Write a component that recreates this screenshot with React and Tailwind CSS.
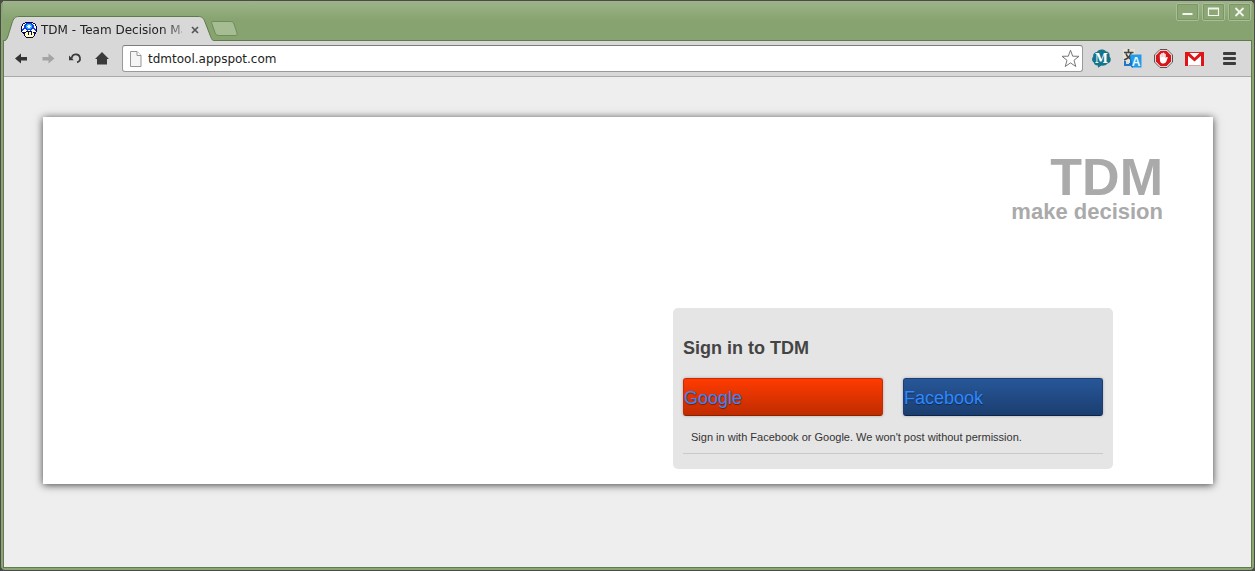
import React from "react";

const MUSHROOM = [
  "....kkkkkkkk....",
  "..kkwbbbbbbwkk..",
  ".kwwbbccccbbwwk.",
  ".kwbbccwwccbbwk.",
  "kwwbbcwwwwcbbwwk",
  "kwwbbccwwccbbwwk",
  "kwbbbbccccbbbbwk",
  "kbbwwbbbbbbwwbbk",
  "kbwwwwbwwbwwwwbk",
  "kwwwwkkkkkkwwwwk",
  ".kkkkyykyykykkk.",
  "..kkyyykyykyykk.",
  "...kyyykyykyyk..",
  "...kyyyyyyyyyk..",
  "....kyyyyyyyk...",
  ".....kkkkkkk....",
];
const INK = { k: "#080840", w: "#ffffff", b: "#1040e8", c: "#28b8ff", y: "#ffffb8" };

function Mushroom() {
  return (
    <svg width="16" height="16" viewBox="0 0 16 16" shapeRendering="crispEdges" className="shrink-0" aria-hidden="true">
      {MUSHROOM.flatMap((row, y) =>
        [...row].map((c, x) => (c === "." ? null : <rect key={`${x}-${y}`} x={x} y={y} width="1" height="1" fill={INK[c]} />))
      )}
    </svg>
  );
}

function WindowButton({ label, children }) {
  return (
    <button aria-label={label} className="flex h-[18px] w-[23px] items-center justify-center rounded-[2px] border border-[#a9bf98] bg-[#8ca675] outline outline-1 -outline-offset-2 outline-[#7c9766]">
      <svg width="13" height="12" viewBox="0 0 13 12" fill="none" stroke="#f1f5ec" strokeWidth="2">{children}</svg>
    </button>
  );
}

function TitleBar() {
  return (
    <header className="relative flex h-10 items-end justify-between border-b border-[#5f7a4b] bg-linear-to-b from-[#9db48a] to-[#87a36f] to-50%">
      <div className="flex h-6 items-start">
        <div className="relative flex h-[25px] w-[211px] items-center pl-[18px]">
          <svg className="absolute left-0 top-0" width="211" height="25" viewBox="0 0 211 25" aria-hidden="true">
            <path d="M0 25 C3 25 4 23 5 20 L9 7 C10.500 2.500 12 .5 16 .5 H195 C199 .5 200.500 2 202 6 L207 19 C208.500 23 209 24.500 211 24.500 V25 Z" fill="#d8d8d8" />
            <path d="M0 25 C3 25 4 23 5 20 L9 7 C10.500 2.500 12 .5 16 .5 H195 C199 .5 200.500 2 202 6 L207 19 C208.500 23 209 24.500 211 24.500" fill="none" stroke="#5f7a4b" />
          </svg>
          <div className="relative flex items-center pt-0.5">
            <Mushroom />
            <span className="ml-1 w-[141px] overflow-hidden whitespace-nowrap text-xs text-[#222] [mask-image:linear-gradient(to_right,black_86%,#0006)]">
              TDM - Team Decision Making
            </span>
            <button aria-label="Close tab" className="ml-[7px] flex size-3 items-center justify-center">
              <svg width="8" height="8" viewBox="0 0 8 8" stroke="#555" strokeWidth="1.700"><path d="M1 1 7 7M7 1 1 7" /></svg>
            </button>
          </div>
        </div>
        <button aria-label="New tab" className="-ml-1 mt-1">
          <svg width="29" height="18" viewBox="0 0 29 18">
            <path d="M3 1.500 H20 C22 1.500 23 2 24 4 L27 13 C27.500 15 27 15.500 25 15.500 H10 C7 15.500 6 15 5 12.500 L2 4 C1.300 2.200 1.500 1.500 3 1.500Z" fill="#a6bc93" stroke="#718c5b" />
          </svg>
        </button>
      </div>
      <div className="mt-0.5 flex gap-[3px] self-start pr-px">
        <WindowButton label="Minimise"><path d="M1.500 8h10" /></WindowButton>
        <WindowButton label="Maximise"><path d="M1 2.500h11" /><path d="M1.500 2v7.500h10V2" strokeWidth="1.200" /></WindowButton>
        <WindowButton label="Close"><path d="M2.500 2 10.500 10M10.500 2 2.500 10" strokeWidth="1.800" /></WindowButton>
      </div>
    </header>
  );
}

function Icon({ label, children }) {
  return (
    <button aria-label={label} className="flex size-5 shrink-0 items-center justify-center">
      {children}
    </button>
  );
}

function Toolbar() {
  return (
    <nav className="flex h-9 items-center border-b border-[#a9a9a9] bg-[#d8d8d8] pl-[7px] pr-3" aria-label="Browser">
      <div className="flex items-center gap-[7px]">
        <Icon label="Back">
          <svg width="13" height="11" viewBox="0 0 13 11"><path d="M0 5.500 6 .5V4H12V7.500H6V10.500Z" fill="#333" /></svg>
        </Icon>
        <Icon label="Forward">
          <svg width="13" height="11" viewBox="0 0 13 11"><path d="M12.500 5.500 6.500 .5V4H.5V7.500H6.500V10.500Z" fill="#a4a4a4" /></svg>
        </Icon>
        <Icon label="Reload">
          <svg width="14" height="13" viewBox="0 0 14 13"><path d="M3.800 6.500A4.100 4.100 0 1 1 9 10.400" fill="none" stroke="#3a3a3a" strokeWidth="1.700" /><path d="M1 3.500V8.200H5.800Z" fill="#3a3a3a" /></svg>
        </Icon>
        <Icon label="Home">
          <svg width="14" height="13" viewBox="0 0 14 13"><path d="M7 0 14 7H12V12.500H2V7H0Z" fill="#3a3a3a" /></svg>
        </Icon>
      </div>
      <div className="ml-2.5 flex h-[27px] min-w-0 flex-1 items-center rounded-[3px] border border-[#9a9a9a] border-t-[#7d7d7d] bg-white pl-1.5 pr-0.5">
        <svg width="13" height="16" viewBox="0 0 13 16" className="shrink-0" aria-hidden="true">
          <path d="M1.500 .5H8L12 4.500V15.500H1.500Z" fill="#f5f5f5" stroke="#959595" /><path d="M8 .5V4.500H12" fill="#fff" stroke="#959595" />
        </svg>
        <input aria-label="Address" type="text" defaultValue="tdmtool.appspot.com" className="ml-1.5 h-5 min-w-0 flex-1 bg-transparent text-xs text-[#222] outline-none" />
        <Icon label="Bookmark">
          <svg width="19" height="19" viewBox="0 0 19 19"><path d="M9.500 1.200 11.700 7.200 18 7.300 13 11.300 14.800 17.500 9.500 13.900 4.200 17.500 6 11.300 1 7.300 7.300 7.200Z" fill="#fff" stroke="#777" strokeLinejoin="round" /></svg>
        </Icon>
      </div>
      <div className="ml-2 flex items-center gap-[11px]">
        <Icon label="Mendeley">
          <svg width="19" height="19" viewBox="0 0 19 19"><path d="M5 3C6 0 12-.5 14 2.500C17 2.500 18 5 17.500 7.500C20 10 18.500 14.500 15.500 14.500C14 16.500 11 17 9.500 16.500L6 18.800 5.800 16.500C3 16.500 2 15 1.800 13.500C-.5 12-.3 9 1.200 7.500C.8 5 2.500 3.200 5 3Z" fill="#13748a" /><text x="9.500" y="13.500" textAnchor="middle" fontFamily="DejaVu Serif, serif" fontWeight="bold" fontSize="12" fill="#fff">M</text></svg>
        </Icon>
        <Icon label="Translate">
          <svg width="19" height="19" viewBox="0 0 19 19"><path d="M0 0H12V13H0Z" fill="#e6e2d4" /><path d="M5.500 0V3M1 3.500H10.500M8 4C7 8 4 10 1 11M3 4.500C4 8 6 9.500 9 10.500" fill="none" stroke="#444" strokeWidth="1.600" /><path d="M2 12V16H7V14" fill="none" stroke="#2375c9" strokeWidth="2" /><path d="M7 5.500H18.500V18.500H9L7 16Z" fill="#239be9" /><path d="M7 5.500 10 18.500H9L7 16Z" fill="#1477c5" /><text x="13.200" y="16.500" textAnchor="middle" fontFamily="Liberation Sans, sans-serif" fontWeight="bold" fontSize="12" fill="#e8f6ff">A</text></svg>
        </Icon>
        <Icon label="Ad blocker">
          <svg width="19" height="19" viewBox="0 0 19 19"><path d="M6 .5H13L18.500 6V13L13 18.500H6L.5 13V6Z" fill="#fff" stroke="#555" /><path d="M6.500 1.800H12.500L17.200 6.500V12.500L12.500 17.200H6.500L1.800 12.500V6.500Z" fill="#d6161c" /><path d="M5.800 8.500V5.600Q6.500 4.800 7.100 5.600V4.500Q7.900 3.700 8.600 4.500V3.900Q9.400 3.100 10.200 3.900V4.700Q11 4 11.700 4.900V9L12.600 8Q13.700 7.600 13.800 8.500L12.300 12.500Q11.500 14.500 9.500 14.500H8.300Q6.600 14.300 6.100 12.200Z" fill="#fff" /><path d="M7.200 5V8.300M8.700 4.300V8.300M10.200 4.300V8.300" stroke="#e88" strokeWidth=".5" /></svg>
        </Icon>
        <Icon label="Gmail">
          <svg width="19" height="14" viewBox="0 0 19 14"><path d="M0 0H19V14H0Z" fill="#fff" /><path d="M3 .5H16" stroke="#d22" /><path d="M3.500 13.500H15.500" stroke="#dba5a2" /><path d="M0 0H3.500L9.500 5.800 15.500 0H19V14H16V3.800L9.500 9.500 3 3.800V14H0Z" fill="#de1418" /></svg>
        </Icon>
      </div>
      <div className="ml-[15px]">
        <Icon label="Menu">
          <svg width="13" height="13" viewBox="0 0 13 13" fill="#3c3c3c"><rect width="13" height="3" rx="1" /><rect y="5" width="13" height="3" rx="1" /><rect y="10" width="13" height="3" rx="1" /></svg>
        </Icon>
      </div>
    </nav>
  );
}

function SignIn() {
  const link = "flex h-[38px] flex-1 items-center rounded-[3px] border pt-0.5 text-lg text-[#2f88ff] shadow-[0_0_3px_#0004] [text-shadow:0_1px_1px_#0006]";
  return (
    <section className="w-full max-w-[440px] rounded-[5px] bg-[#e5e5e5] px-2.5 pb-[15px] pt-[26px]">
      <h2 className="text-lg font-bold text-[#444]">Sign in to TDM</h2>
      <div className="mt-4 flex gap-5">
        <a href="#google" className={`${link} border-[#c72c00] border-b-[#8c2000] bg-linear-to-b from-[#ff3b00] to-[#bf2c00]`}>Google</a>
        <a href="#facebook" className={`${link} border-[#1c3e70] border-b-[#0d2347] bg-linear-to-b from-[#275799] to-[#1b3e70]`}>Facebook</a>
      </div>
      <p className="mt-[13px] border-b border-[#c9c9c9] px-2 pb-[7px] text-[11px] leading-[17px] text-[#333]">
        Sign in with Facebook or Google. We won't post without permission.
      </p>
    </section>
  );
}

export default function App() {
  return (
    <div className="min-h-screen bg-[#4a4a4a]">
      <div className="flex min-h-screen flex-col rounded-[5px] border border-[#4a4a4a] bg-[#8aa672] px-0.5 pb-0.5 font-['DejaVu_Sans',sans-serif]">
        <TitleBar />
        <div className="flex flex-1 flex-col border border-t-0 border-[#617b4e] bg-[#eee]">
          <Toolbar />
          <main className="pb-20 pl-[39px] pr-[38px] pt-10 font-['Liberation_Sans',sans-serif]">
            <div className="bg-white pb-[15px] pt-[34px] shadow-[0_1px_8px_#000b]">
              <div className="pr-[50px] text-right font-bold text-[#aaa]">
                <h1 className="text-[52px] leading-[52px]">TDM</h1>
                <p className="text-[22px] leading-[18px]">make decision</p>
              </div>
              <div className="mt-[87px] flex justify-end pr-[100px]">
                <SignIn />
              </div>
            </div>
          </main>
        </div>
      </div>
    </div>
  );
}
